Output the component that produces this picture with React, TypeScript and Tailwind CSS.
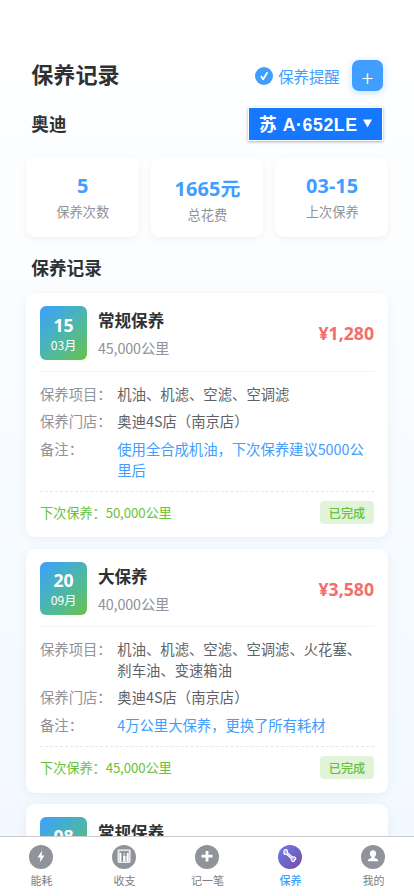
import type { ReactNode } from 'react';

type Row = { label: string; value: string; note?: boolean };
type RecordItem = {
  day: string;
  month: string;
  title: string;
  km: string;
  price: string;
  rows: Row[];
  next: string;
};

const records: RecordItem[] = [
  {
    day: '15',
    month: '03月',
    title: '常规保养',
    km: '45,000公里',
    price: '¥1,280',
    rows: [
      { label: '保养项目：', value: '机油、机滤、空滤、空调滤' },
      { label: '保养门店：', value: '奥迪4S店（南京店）' },
      { label: '备注：', value: '使用全合成机油，下次保养建议5000公里后', note: true },
    ],
    next: '下次保养：50,000公里',
  },
  {
    day: '20',
    month: '09月',
    title: '大保养',
    km: '40,000公里',
    price: '¥3,580',
    rows: [
      { label: '保养项目：', value: '机油、机滤、空滤、空调滤、火花塞、刹车油、变速箱油' },
      { label: '保养门店：', value: '奥迪4S店（南京店）' },
      { label: '备注：', value: '4万公里大保养，更换了所有耗材', note: true },
    ],
    next: '下次保养：45,000公里',
  },
];

const stats = [
  { value: '5', label: '保养次数', top: 'pt-[14.5px]' },
  { value: '1665元', label: '总花费', top: 'pt-[17.5px]' },
  { value: '03-15', label: '上次保养', top: 'pt-[14.5px]' },
];

function CardHead({ day, title }: { day: string; title: string }) {
  return (
    <>
      <div className="flex h-[54px] w-[47px] flex-col items-center rounded-[6px] bg-linear-135 from-[#409eff] to-[#67c23a] pt-[9px] text-white">
        <span className="font-['Noto_Sans','Noto_Sans_CJK_SC',sans-serif] text-[17.66px] leading-[20px] font-bold">{day}</span>
      </div>
      <span className="ml-[11px] pt-[3px] text-[16.56px] leading-[24px] font-bold text-[#303133]">{title}</span>
    </>
  );
}

function RecordCard({ item, index }: { item: RecordItem; index: number }) {
  return (
    <article className="h-[244px] shrink-0 rounded-[9px] bg-white px-[14px] pt-[13px] shadow-[0_2px_11px_rgba(0,0,0,0.05)]">
      <div className={`flex items-start border-b border-[#f3f4f6] ${index === 0 ? 'h-[66px]' : 'h-[65px]'}`}>
        <div
          className={`flex w-[47px] flex-col items-center rounded-[6px] bg-linear-135 from-[#409eff] to-[#67c23a] text-white ${
            index === 0 ? 'h-[54px] pt-[9px]' : 'h-[53px] pt-[8px]'
          }`}
        >
          <span className="font-['Noto_Sans','Noto_Sans_CJK_SC',sans-serif] text-[17.66px] leading-[20px] font-bold">{item.day}</span>
          <span className="text-[12.14px] leading-[19px]">{item.month}</span>
        </div>
        <div className="ml-[11px] flex flex-1 flex-col pt-[2px]">
          <span className="text-[16.56px] leading-[24px] font-bold text-[#303133]">{item.title}</span>
          <span className="mt-[5px] text-[14.35px] leading-[22px] tracking-[-0.15px] text-[#909399]">{item.km}</span>
        </div>
        <span className="font-['Noto_Sans','Noto_Sans_CJK_SC',sans-serif] pt-[15px] text-[17.66px] leading-[25px] font-bold text-[#f56c6c]">
          {item.price}
        </span>
      </div>
      <div className="flex h-[120px] flex-col gap-[6.3px] border-b border-dashed border-[#e4e7ed] pt-[11.2px] text-[14.35px] leading-[21px]">
        {item.rows.map((row) => (
          <div key={row.label} className="flex">
            <span className="w-[77.3px] shrink-0 text-[#909399]">{row.label}</span>
            <span className={row.note ? 'tracking-[-0.03px] text-[#409eff]' : 'text-[#606266]'}>{row.value}</span>
          </div>
        ))}
      </div>
      <div className="mt-[9px] flex items-center justify-between">
        <span className="text-[13.25px] leading-[22px] tracking-[-0.12px] text-[#67c23a]">{item.next}</span>
        <span className="flex h-[23px] w-[54px] items-center justify-center rounded-[4px] bg-[#e1f3d8] pt-[1.5px] text-[12.14px] font-medium text-[#67c23a]">
          已完成
        </span>
      </div>
    </article>
  );
}

function Tab({ label, active, children }: { label: string; active?: boolean; children: ReactNode }) {
  return (
    <div className="flex w-[83px] shrink-0 flex-col items-center pt-[8px]">
      <svg viewBox="0 0 24 24" className="mr-px size-6">
        <defs>
          <linearGradient id="tabGradient" x1="0" y1="0" x2="1" y2="1">
            <stop offset="0" stopColor="#667eea" />
            <stop offset="1" stopColor="#764ba2" />
          </linearGradient>
        </defs>
        <circle cx="12" cy="12" r="12" fill={active ? 'url(#tabGradient)' : '#909399'} />
        {children}
      </svg>
      <span className={`mt-[3px] text-[11.04px] leading-[16px] ${active ? 'font-medium text-[#409eff]' : 'text-[#808080]'}`}>{label}</span>
    </div>
  );
}

export default function App() {
  return (
    <div className="flex h-[896px] w-[414px] flex-col overflow-hidden bg-linear-to-b from-white to-[#f0f8ff] font-['Noto_Sans_CJK_SC',sans-serif]">
      <div className="flex min-h-0 flex-1 flex-col overflow-hidden px-[26px]">
        <header className="mt-[60px] flex h-[31px] shrink-0 items-center pr-[5px] pl-[5.3px]">
          <h1 className="flex-1 pb-[5px] text-[22.08px] leading-[28px] font-bold text-[#303133]">保养记录</h1>
          <svg viewBox="0 0 18 18" className="size-[18px]">
            <circle cx="9" cy="9" r="9" fill="#409eff" />
            <path d="M5.3 9.2 6.8 8.5 8 10.7 11.5 5 13.2 5.8 8.8 13 7.5 13.2Z" fill="#fff" />
          </svg>
          <span className="ml-[5px] pt-[2px] text-[15.46px] leading-[31px] tracking-[-0.1px] text-[#409eff]">保养提醒</span>
          <button className="ml-[12.4px] flex size-[31px] items-center justify-center rounded-[7px] bg-[#409eff] shadow-[0_2px_7px_rgba(64,158,255,0.3)]">
            <span className="pt-[2px] text-[22px] leading-none font-light text-white">+</span>
          </button>
        </header>
        <section className="mt-[16px] flex h-[34px] shrink-0 items-center justify-between pr-[5px] pl-[5.3px]">
          <span className="text-[17.66px] font-bold text-[#303133]">奥迪</span>
          <div className="flex h-[34px] w-[135px] items-center border border-white bg-[#1677ff] pl-[10px] font-['Liberation_Sans','Noto_Sans_CJK_SC',sans-serif] text-[17.66px] font-bold whitespace-pre text-white shadow-[0_1px_3px_rgba(0,0,0,0.3)]">
            <span className="pt-[2px] tracking-[0.6px]">苏 A·652LE</span>
            <svg viewBox="0 0 10 9" className="mb-px ml-[5.5px] h-[9px] w-[9px]">
              <path d="M0 0H10L5 9Z" fill="#fff" />
            </svg>
          </div>
        </section>
        <section className="mt-[16px] grid h-[80px] shrink-0 grid-cols-3 gap-[12px]">
          {stats.map((s) => (
            <div
              key={s.label}
              className={`flex flex-col items-center rounded-[9px] bg-white pl-px shadow-[0_2px_9px_rgba(0,0,0,0.05)] ${s.top}`}
            >
              <span className="font-['Noto_Sans','Noto_Sans_CJK_SC',sans-serif] text-[19.87px] leading-[27px] font-bold tracking-[0.1px] text-[#409eff]">
                {s.value}
              </span>
              <span className="text-[13.25px] leading-[25px] text-[#909399]">{s.label}</span>
            </div>
          ))}
        </section>
        <h2 className="mt-[17px] h-[28px] shrink-0 pl-[5.3px] text-[17.66px] leading-[27px] font-bold text-[#303133]">保养记录</h2>
        <main className="mt-[11px] flex flex-col gap-[12px]">
          {records.map((r, i) => (
            <RecordCard key={r.day} item={r} index={i} />
          ))}
          <article className="mt-[-1px] flex h-[60px] shrink-0 overflow-hidden rounded-t-[9px] bg-white px-[14px] pt-[13px] shadow-[0_2px_11px_rgba(0,0,0,0.05)]">
            <CardHead day="08" title="常规保养" />
          </article>
        </main>
      </div>
      <nav className="flex h-[60px] shrink-0 overflow-hidden border-t border-[#cccccc] bg-white">
        <Tab label="能耗">
          <path d="M13.2 5.5 8.5 12.4h3L10.8 17.5l4.7-7h-2.9Z" fill="#fff" />
        </Tab>
        <Tab label="收支">
          <rect x="6.2" y="5" width="11.8" height="12.2" rx="0.8" fill="#ffffff66" stroke="#fff" strokeWidth="1.1" />
          <path d="M8.4 8v8.5M12.2 11v5.5M15.7 8v8.5" stroke="#fff" strokeWidth="1.8" />
          <path d="M8 7h8.5M10.3 7v9.5M14 7v4" stroke="#777a82" strokeWidth="1" />
        </Tab>
        <Tab label="记一笔">
          <path d="M12 6v10.5M6.5 11.2h11" stroke="#fff" strokeWidth="2.8" />
        </Tab>
        <Tab label="保养" active>
          <path
            d="M6 6.8C5.7 5.5 7.4 4 8.7 4.8 9.7 5.4 9.8 6.5 9.4 7.8L14.6 12.3C15.6 11.5 17.2 12 17.7 13.2 18 14.3 17.3 14.8 16.6 14.7 16.7 16 15.5 17 14.2 16.3 13.1 15.6 13 14.6 13.3 13.5L8.2 9C7.2 9.6 6.3 9.5 5.9 8.6 5.6 7.8 5.7 7.1 6 6.8Z"
            fill="#ffffff66"
            stroke="#fff"
            strokeWidth="1.2"
          />
        </Tab>
        <Tab label="我的">
          <path d="M12 5.2c2 0 3.1 1.4 3.1 3.3 0 1.6-.7 2.7-1.5 3.5v1c1.8.4 3.7 1.2 3.7 3.2H6.7c0-2 1.9-2.8 3.7-3.2v-1c-.8-.8-1.5-1.9-1.5-3.5 0-1.9 1.1-3.3 3.1-3.3Z" fill="#fff" />
        </Tab>
      </nav>
    </div>
  );
}
